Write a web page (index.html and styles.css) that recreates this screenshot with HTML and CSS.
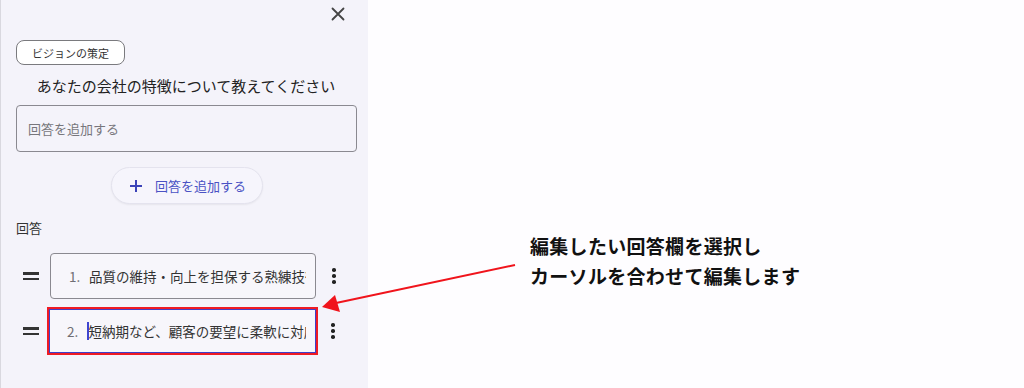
FILE: index.html
```html
<!DOCTYPE html>
<html lang="ja">
<head>
<meta charset="utf-8">
<link rel="stylesheet" href="styles.css">
</head>
<body>
<div class="page">
  <aside class="panel">
    <div class="topbar">
      <svg class="close" width="14" height="14" viewBox="0 0 14 14"><path d="M1.5 1.5L12.5 12.5M12.5 1.5L1.5 12.5" stroke="#444" stroke-width="1.8" stroke-linecap="round"/></svg>
    </div>
    <div class="chip">ビジョンの策定</div>
    <h2 class="title">あなたの会社の特徴について教えてください</h2>
    <div class="input">回答を追加する</div>
    <div class="btnwrap">
      <button class="addbtn">
        <svg width="14" height="14" viewBox="0 0 14 14"><path d="M7 1V13M1 7H13" stroke="#3b43b8" stroke-width="2"/></svg>
        <span>回答を追加する</span>
      </button>
    </div>
    <div class="label">回答</div>
    <div class="rows">
      <div class="row">
        <div class="handle"><span></span><span></span></div>
        <div class="field"><span class="num">1.</span><span class="txt">品質の維持・向上を担保する熟練技術者</span></div>
        <div class="kebab"><i></i><i></i><i></i></div>
      </div>
      <div class="row">
        <div class="handle"><span></span><span></span></div>
        <div class="field active"><span class="num">2.</span><span class="caret"></span><span class="txt">短納期など、顧客の要望に柔軟に対応</span></div>
        <div class="kebab"><i></i><i></i><i></i></div>
      </div>
    </div>
  </aside>
  <main class="canvas">
    <p class="note">編集したい回答欄を選択し<br>カーソルを合わせて編集します</p>
  </main>
  <svg class="arrow" width="1024" height="388" viewBox="0 0 1024 388">
    <line x1="515" y1="265" x2="336" y2="303" stroke="#f0141c" stroke-width="2"/>
    <polygon points="322,307 335,295 340,312" fill="#f0141c"/>
  </svg>
</div>
</body>
</html>
```
FILE: styles.css
```css
* { box-sizing: border-box; }
html, body { margin: 0; padding: 0; }
body {
  width: 1024px;
  height: 388px;
  overflow: hidden;
  background: #fefdff;
  font-family: "Noto Sans CJK JP", "Noto Sans", sans-serif;
  color: #222;
}
.page {
  position: relative;
  display: flex;
  width: 1024px;
  height: 388px;
}
.panel {
  width: 368px;
  height: 388px;
  background: #f4f3fa;
  border-left: 1px solid #d9d8df;
  padding: 0 12px 0 15px;
  display: flex;
  flex-direction: column;
}
.topbar {
  height: 28px;
  display: flex;
  justify-content: flex-end;
  align-items: flex-end;
  padding-right: 11px;
}
.close { display: block; margin-bottom: 7px; }
.chip {
  margin-top: 12px;
  align-self: flex-start;
  width: 109px;
  height: 25px;
  border: 1px solid #7a7a7e;
  border-radius: 8px;
  background: #fff;
  font-size: 11px;
  color: #333;
  display: flex;
  align-items: center;
  justify-content: center;
}
.title {
  margin: 10px 0 0;
  height: 22px;
  font-size: 15px;
  line-height: 22px;
  font-weight: 400;
  color: #222;
  text-align: center;
}
.input {
  margin-top: 8px;
  width: 341px;
  height: 47px;
  border: 1px solid #8a8990;
  border-radius: 4px;
  padding-left: 11px;
  font-size: 13px;
  color: #77767c;
  display: flex;
  align-items: center;
}
.btnwrap {
  margin-top: 15px;
  width: 341px;
  display: flex;
  justify-content: center;
}
.addbtn {
  width: 152px;
  height: 37px;
  border-radius: 19px;
  border: 1px solid #e4e3ee;
  background: #f6f5fc;
  box-shadow: 0 1px 2px rgba(0,0,0,0.06);
  display: flex;
  align-items: center;
  justify-content: center;
  gap: 12px;
  padding: 0 0 0 2px;
  font-family: inherit;
  font-size: 13px;
  color: #4a52c4;
}
.addbtn svg { display: block; }
.label {
  margin-top: 16px;
  height: 16px;
  line-height: 16px;
  font-size: 13px;
  color: #333;
}
.rows {
  margin-top: 17px;
  display: flex;
  flex-direction: column;
  gap: 9px;
}
.row {
  display: flex;
  align-items: center;
  height: 46px;
}
.handle {
  width: 16px;
  margin-left: 7px;
  display: flex;
  flex-direction: column;
  gap: 3px;
}
.handle span {
  display: block;
  height: 2.5px;
  background: #333;
}
.field {
  margin-left: 11px;
  width: 266px;
  height: 46px;
  border: 1px solid #8a8990;
  border-radius: 4px;
  background: #f7f6fb;
  display: flex;
  align-items: center;
  padding-left: 18px;
  padding-right: 9px;
  overflow: hidden;
  white-space: nowrap;
  font-size: 13.5px;
  color: #333;
}
.field .num { color: #6f6e74; width: 20px; flex: none; }
.field .txt { overflow: hidden; }
.field.active {
  margin-left: 10px;
  width: 267px;
  height: 44px;
  border: 1.5px solid #3e3fc8;
  border-radius: 0;
  box-shadow: 0 0 0 2px #ee1b24;
  padding-left: 17px;
}
.caret {
  flex: none;
  width: 1.5px;
  height: 18px;
  background: #3e44d0;
}
.kebab {
  margin-left: 16px;
  display: flex;
  flex-direction: column;
  gap: 2.5px;
}
.row:last-child .kebab { margin-left: 15px; }
.kebab i {
  display: block;
  width: 3.5px;
  height: 3.5px;
  border-radius: 50%;
  background: #222;
}
.canvas {
  flex: 1;
  padding: 231px 0 0 162px;
}
.note {
  margin: 0;
  font-size: 19px;
  line-height: 30px;
  font-weight: 700;
  color: #111;
  letter-spacing: 0.3px;
}
.arrow {
  position: absolute;
  left: 0;
  top: 0;
  pointer-events: none;
}
```
